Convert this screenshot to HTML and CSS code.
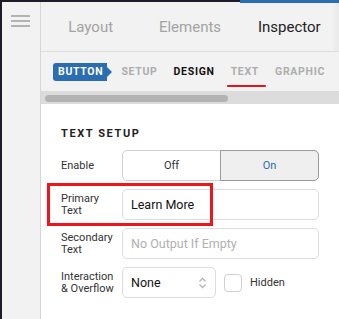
FILE: index.html
```html
<!DOCTYPE html>
<html lang="en">
<head>
    <meta charset="UTF-8">
    <meta name="viewport" content="width=device-width, initial-scale=1.0">
    <title>Inspector</title>
    <link rel="stylesheet" href="styles.css">
</head>
<body>
    <div class="app">
        <div class="edge"></div>
        <div class="sidebar">
            <div class="menu-btn">
                <span></span><span></span><span></span>
            </div>
        </div>
        <div class="main">
            <div class="tabs">
                <div class="tab">Layout</div>
                <div class="tab">Elements</div>
                <div class="tab active">Inspector</div>
            </div>
            <div class="subnav">
                <span class="badge">BUTTON</span>
                <span class="sub">SETUP</span>
                <span class="sub current">DESIGN</span>
                <span class="sub marked">TEXT</span>
                <span class="sub">GRAPHIC</span>
            </div>
            <div class="scroller">
                <div class="thumb"></div>
            </div>
            <div class="panel">
                <h3 class="section-title">TEXT SETUP</h3>

                <div class="form-row">
                    <label>Enable</label>
                    <div class="segmented">
                        <span class="seg">Off</span>
                        <span class="seg on">On</span>
                    </div>
                </div>

                <div class="form-row highlighted">
                    <label>Primary<br>Text</label>
                    <div class="field">Learn More</div>
                </div>

                <div class="form-row">
                    <label>Secondary<br>Text</label>
                    <div class="field placeholder">No Output If Empty</div>
                </div>

                <div class="form-row">
                    <label>Interaction<br>&amp; Overflow</label>
                    <div class="select">
                        <span>None</span>
                        <svg width="9" height="14" viewBox="0 0 9 14">
                            <path d="M1.5 5.5 L4.5 2.5 L7.5 5.5" fill="none" stroke="#b5b5b5" stroke-width="1.3"/>
                            <path d="M1.5 8.5 L4.5 11.5 L7.5 8.5" fill="none" stroke="#b5b5b5" stroke-width="1.3"/>
                        </svg>
                    </div>
                    <span class="checkbox"></span>
                    <span class="check-label">Hidden</span>
                </div>
            </div>
        </div>
    </div>
</body>
</html>
```

FILE: styles.css
```css
body {
    margin: 0;
    width: 339px;
    height: 319px;
    overflow: hidden;
    background-color: #1d1d2a;
    font-family: Roboto, "Liberation Sans", sans-serif;
}

.app {
    display: flex;
    height: 319px;
}

.edge {
    width: 2px;
    flex-shrink: 0;
    background-color: #1d1d2a;
}

.sidebar {
    width: 38px;
    flex-shrink: 0;
    margin-top: 2px;
    background-color: #f2f2f2;
    border-right: 1px solid #d6d6d6;
}

.menu-btn {
    display: flex;
    flex-direction: column;
    gap: 3px;
    padding: 13px 0 0 9px;
}

.menu-btn span {
    display: block;
    width: 19px;
    height: 2px;
    background-color: #b3b3b3;
}

.main {
    flex: 1;
    min-width: 0;
    display: flex;
    flex-direction: column;
    background-color: #fff;
}

.tabs {
    display: flex;
    height: 52px;
    box-sizing: border-box;
    background-color: #f2f2f2;
    border-bottom: 1px solid #dedede;
    box-shadow: inset -6px 0 6px -4px rgba(0,0,0,0.06);
}

.tab {
    flex: 1;
    display: flex;
    align-items: center;
    justify-content: center;
    border-top: 2px solid #1d1d2a;
    font-size: 15px;
    color: #a3a3a3;
}

.tab.active {
    border-top: 3px solid #2a6db0;
    padding-bottom: 1px;
    color: #222;
}

.subnav {
    display: flex;
    align-items: center;
    height: 39px;
    padding-left: 12px;
    background-color: #f2f2f2;
    font-size: 10.5px;
    font-weight: bold;
    letter-spacing: 0.7px;
    white-space: nowrap;
}

.badge {
    position: relative;
    display: flex;
    align-items: center;
    height: 18px;
    padding: 0 4px 0 5px;
    margin-right: 14px;
    background-color: #2a6db0;
    border-radius: 3px 0 0 3px;
    color: #fff;
}

.badge::after {
    content: "";
    position: absolute;
    right: -5px;
    top: 4px;
    border-left: 5px solid #2a6db0;
    border-top: 5px solid transparent;
    border-bottom: 5px solid transparent;
}

.sub {
    color: #adadad;
    margin-right: 16px;
}

.sub.current {
    color: #111;
}

.sub.marked {
    position: relative;
}

.sub.marked::after {
    content: "";
    position: absolute;
    left: -4px;
    right: -7px;
    bottom: -9px;
    height: 2px;
    background-color: #e6141a;
    border-radius: 1px;
}

.scroller {
    height: 13px;
    box-sizing: border-box;
    background-color: #dcdcdc;
    padding: 4px 0 0 4px;
}

.thumb {
    width: 183px;
    height: 7px;
    border-radius: 4px;
    background-color: #b3b3b3;
}

.panel {
    flex: 1;
    padding: 24px 20px 0 20px;
    background-color: #fff;
}

.section-title {
    margin: 0 0 10px 0;
    font-size: 11px;
    letter-spacing: 1.6px;
    color: #222;
    line-height: 12px;
}

.form-row {
    position: relative;
    display: flex;
    align-items: center;
    height: 31px;
    margin-bottom: 8px;
}

.form-row label {
    width: 61px;
    flex-shrink: 0;
    font-size: 11px;
    line-height: 12px;
    color: #333;
}

.segmented {
    flex: 1;
    display: flex;
    height: 31px;
    box-sizing: border-box;
    border: 1px solid #d2d2d2;
    border-radius: 5px;
}

.seg {
    flex: 1;
    display: flex;
    align-items: center;
    justify-content: center;
    font-size: 11px;
    color: #333;
}

.seg.on {
    margin: -1px -1px -1px 0;
    background-color: #efefef;
    border: 1px solid #9a9a9a;
    border-radius: 0 5px 5px 0;
    color: #2a6db0;
}

.field {
    flex: 1;
    display: flex;
    align-items: center;
    height: 31px;
    box-sizing: border-box;
    padding-left: 8px;
    border: 1px solid #dcdcdc;
    border-radius: 5px;
    font-size: 12.5px;
    color: #111;
}

.field.placeholder {
    font-size: 12.5px;
    color: #b0b0b0;
}

.highlighted::before {
    content: "";
    position: absolute;
    left: -14px;
    top: -6px;
    width: 160px;
    height: 37px;
    border: 3px solid #f0141b;
}

.select {
    display: flex;
    align-items: center;
    justify-content: space-between;
    width: 94px;
    height: 31px;
    box-sizing: border-box;
    padding: 0 8px 0 8px;
    border: 1px solid #dcdcdc;
    border-radius: 5px;
    font-size: 12.5px;
    color: #111;
}

.checkbox {
    width: 18px;
    height: 18px;
    box-sizing: border-box;
    margin-left: 8px;
    border: 1px solid #cfcfcf;
    border-radius: 4px;
}

.check-label {
    margin-left: 8px;
    font-size: 11px;
    color: #333;
}
```
